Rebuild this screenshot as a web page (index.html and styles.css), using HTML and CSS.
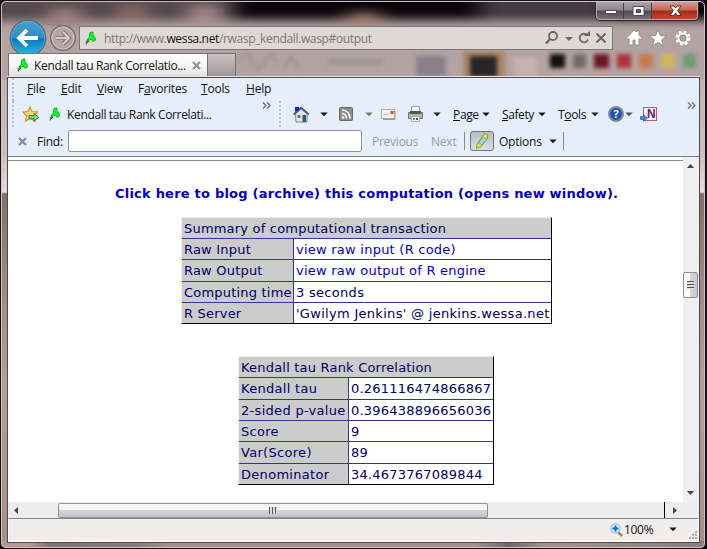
FILE: index.html
```html
<!DOCTYPE html>
<html lang="en">
<head>
<meta charset="utf-8">
<title>Kendall tau Rank Correlation</title>
<link rel="stylesheet" href="styles.css">
</head>
<body>
<svg width="0" height="0" class="defs"><defs>
  <linearGradient id="blue" x1="0" y1="0" x2="0" y2="1"><stop offset="0" stop-color="#4aa3d2"/><stop offset=".48" stop-color="#2b8dc4"/><stop offset=".52" stop-color="#087bbb"/><stop offset="1" stop-color="#35b4e8"/></linearGradient>
  <symbol id="leaf" viewBox="0 0 12 14"><path d="M5.500 1H8v2.500l2.500 4V9L8 10.500 6.500 8.500H5L2.500 11 3 7.500 4.500 6V3z" fill="#00ff17" stroke="#079c18" stroke-width=".7"/><path d="M1.300 13.500v-3l2-2.500M1.500 12.500l2.500-2.500" fill="none" stroke="#087410" stroke-width="1"/></symbol>
  <symbol id="down" viewBox="0 0 8 5"><path d="M.3.5h7.400L4 4.300z" fill="currentColor"/></symbol>
</defs></svg>
<div class="window">
  <svg class="glass" viewBox="0 0 707 549" aria-hidden="true">
    <defs><filter id="b4" color-interpolation-filters="sRGB"><feGaussianBlur stdDeviation="11 5"/></filter><filter id="b2" color-interpolation-filters="sRGB"><feGaussianBlur stdDeviation="2"/></filter>
    <linearGradient id="side" x1="0" y1="0" x2="0" y2="1"><stop offset="0" stop-color="#b6a6a5"/><stop offset=".28" stop-color="#cbbfbd"/><stop offset=".35" stop-color="#e2dcda"/><stop offset=".353" stop-color="#81706f"/><stop offset=".5" stop-color="#9c8785"/><stop offset=".7" stop-color="#b49d97"/><stop offset="1" stop-color="#a58f8b"/></linearGradient>
    <linearGradient id="foot"><stop offset="0" stop-color="#b39b93"/><stop offset=".04" stop-color="#b39b93"/><stop offset=".07" stop-color="#857477"/><stop offset=".19" stop-color="#8b7a7b"/><stop offset=".24" stop-color="#a69390"/><stop offset=".67" stop-color="#a69390"/><stop offset=".72" stop-color="#75666a"/><stop offset=".77" stop-color="#a69390"/><stop offset="1" stop-color="#8d7c7d"/></linearGradient></defs>
    <rect width="707" height="549" fill="url(#side)"/>
    <rect y="20" width="707" height="60" fill="#b3a3a2"/>
    <g filter="url(#b4)"><rect x="-30" y="-20" width="770" height="40" fill="#08040a"/><rect x="-30" y="-20" width="265" height="39" fill="#54484e"/><rect x="50" y="8" width="30" height="20" fill="#a38182"/><rect x="118" y="4" width="28" height="18" fill="#8b6a62"/><rect x="190" y="5" width="30" height="21" fill="#a98c8c"/><rect x="348" y="12" width="32" height="12" fill="#9b7464"/><rect x="480" y="-15" width="130" height="34" fill="#443b42"/></g>
    <g filter="url(#b2)"><path d="M239 62q8-14 13 0t12 0 13 2M283 69l8-12 8 12" fill="none" stroke="#8e8388" stroke-width="3" opacity=".5"/><path d="M328 62h55" stroke="#8d8184" stroke-width="5" opacity=".5"/><rect x="416" y="56" width="30" height="20" fill="#8a8188"/><rect x="463" y="51" width="42" height="26" fill="#a98564"/><rect x="470" y="56" width="27" height="21" fill="#282624"/><rect x="514" y="57" width="23" height="18" fill="#c6b3ae"/>
      <rect x="550" y="54" width="15" height="14" fill="#111"/><rect x="573" y="54" width="13" height="14" fill="#74696a"/><rect x="594" y="54" width="15" height="14" fill="#6c1525"/><rect x="617" y="54" width="14" height="14" fill="#ae343b"/><rect x="639" y="54" width="14" height="14" fill="#c77a4e"/><rect x="661" y="54" width="14" height="14" fill="#cbb95a"/><rect x="683" y="54" width="13" height="14" fill="#6f9c70"/><path d="M593 75h17M638 75h15M661 75h15" stroke="#c09b87" stroke-width="4"/></g>
    <rect y="541" width="707" height="8" fill="url(#foot)"/>
  </svg>

  <header class="titlebar">
    <div class="controls">
      <span class="ctl"><svg width="14" height="12"><rect x="2.500" y="5.500" width="11" height="3" fill="#fff" stroke="#50484e"/></svg></span>
      <span class="ctl"><svg width="14" height="12"><path d="M2 1.500h11v9H2zM5.500 4.500h4v3h-4z" fill="#fff" fill-rule="evenodd" stroke="#50484e"/></svg></span>
      <span class="ctl close"><svg width="14" height="12"><path d="M2 1h4l1.500 2L9 1h4L9.700 5.500 13 10.500H9L7.500 8 6 10.500H2l3.300-5z" fill="#fff" stroke="#593438"/></svg></span>
    </div>
  </header>

  <nav class="navrow">
    <svg class="navbtns" width="72" height="42" viewBox="0 0 72 42">
      <path d="M33 4q7 5 23 4" stroke="#8f8180" fill="none"/>
      <circle cx="21" cy="21" r="17.700" fill="url(#blue)" stroke="#5d6870" stroke-width="1.300"/><circle cx="21" cy="21" r="16.700" fill="none" stroke="#74c0e4" stroke-width=".7" opacity=".7"/>
      <path d="M31 21H13M20 13l-8 8 8 8" fill="none" stroke="#fff" stroke-width="3.800"/>
      <circle cx="56" cy="21" r="12.300" fill="#b4a6a6" stroke="#77696c" stroke-width="1.400"/><circle cx="56" cy="21" r="11" fill="none" stroke="#d3c8c7"/>
      <path d="M49 21h11M56 15l6 6-6 6" fill="none" stroke="#786b6e" stroke-width="4"/><path d="M49 21h11M56 15l6 6-6 6" fill="none" stroke="#d4cccc" stroke-width="2.300"/>
    </svg>
    <div class="address">
      <svg class="leaf" width="12" height="14"><use href="#leaf"/></svg>
      <span class="url">http://www.<b>wessa.net</b>/rwasp_kendall.wasp#output</span>
      <svg class="addrtools" width="64" height="16" viewBox="0 0 64 16"><g fill="none" stroke="#6d6868" stroke-width="1.800"><circle cx="9" cy="6" r="4"/><path d="M6 9l-4 4.500" stroke-width="2.400"/><path d="M43 5a4.300 4.300 0 1 0 1 4.500"/><path d="M52.500 3.500l9 9m0-9l-9 9" stroke-width="2.200"/></g><path d="M40 6h6V1zM21 7h8l-4 4z" fill="#6d6868"/></svg>
    </div>
    <svg class="cmd" width="72" height="20" viewBox="0 0 72 20"><g fill="#fff" stroke="#8c8181" stroke-width=".8"><path d="M1.500 10 9 2l2 2V3h3v4l2.500 3-1 1.500-1.500-.800V17h-4v-5H8v5H4v-6.500l-1.500 1z"/><path d="M33 2l2.400 5.600 6 .3-4.700 3.800 1.700 6-5.400-3.400-5.400 3.400 1.700-6-4.700-3.800 6-.3z"/></g><g fill="none"><circle cx="58" cy="10" r="6.500" stroke="#8c8181" stroke-width="3.500" stroke-dasharray="3 2.100"/><circle cx="58" cy="10" r="6.500" stroke="#fff" stroke-width="2.500" stroke-dasharray="2.900 2.200"/><circle cx="58" cy="10" r="4.500" stroke="#fff" stroke-width="2"/><circle cx="58" cy="10" r="3" stroke="#8c8181" stroke-width=".8"/></g></svg>
  </nav>

  <div class="tabs">
    <div class="tab"><svg width="12" height="14"><use href="#leaf"/></svg><span class="tabtext">Kendall tau Rank Correlatio...</span><svg width="9" height="9"><path d="M1 1l7 7m0-7L1 8" stroke="#959092" stroke-width="2.200"/></svg></div>
    <div class="newtab"></div>
  </div>

  <main class="client">
    <section class="toolbars">
      <div class="menu"><span class="m1"><u>F</u>ile</span><span class="m2"><u>E</u>dit</span><span class="m3"><u>V</u>iew</span><span class="m4">F<u>a</u>vorites</span><span class="m5"><u>T</u>ools</span><span class="m6"><u>H</u>elp</span></div>
      <div class="favs">
        <div class="favlinks">
          <svg width="18" height="17" viewBox="0 0 18 17"><path d="M8 1l2 4.500 5.500.5-4 4 1.500 5-5-2.500L3.500 15l1-5L1 6l5-.5z" fill="#fbd778" stroke="#d4942c" stroke-width="1.200"/><path d="M7 9.500h5V7.300l4.700 4-4.700 4v-2.500H7z" fill="#78d95e" stroke="#397f36"/></svg>
          <svg width="12" height="14"><use href="#leaf"/></svg><span class="favtext">Kendall tau Rank Correlati...</span>
          <svg class="more" width="9" height="7"><path d="M1 .5l3 3-3 3m4-6l3 3-3 3" fill="none" stroke="#5965ad" stroke-width="1.200"/></svg>
        </div>
        <div class="commands">
          <svg class="house" width="17" height="17" viewBox="0 0 17 17"><path d="M2.500 8L8 3l6 5v8h-11z" fill="#e6e6e2" stroke="#88857b"/><path d="M.7 8.500L8.200 1.700l7.500 6.800" fill="none" stroke="#4055a5" stroke-width="1.700"/><path d="M2 1h4v3L2 6z" fill="#1622d3"/><path d="M9.500 9h3.500v7H9.500z" fill="#245795"/><path d="M4.500 9h3v3h-3z" fill="#777"/></svg>
          <svg class="dd d1" width="8" height="5"><use href="#down"/></svg>
          <svg class="rss" width="14" height="14"><rect x=".5" y=".5" width="13" height="13" rx="1" fill="#8b8b8b" stroke="#686868"/><circle cx="4" cy="10.500" r="1.300" fill="#fff"/><path d="M3 6.500a4.500 4.500 0 0 1 4.500 5M3 3a8 8 0 0 1 8 8.500" fill="none" stroke="#fff" stroke-width="1.600"/></svg>
          <svg class="dd d2" width="8" height="5"><use href="#down"/></svg>
          <svg class="mail" width="15" height="11"><rect x=".5" y=".5" width="13" height="9" fill="#f3f1ec" stroke="#b3afaa"/><path d="M14 2v8.500H2" fill="none" stroke="#999"/><path d="M9.500 2h3v3h-3z" fill="#db4745"/><path d="M3 5.500h4" stroke="#bbb"/></svg>
          <svg class="print" width="17" height="16"><path d="M4.500.5h8v6h-8z" fill="#fff" stroke="#999"/><path d="M1.500 6.500h14v6h-14z" fill="#b4b2ad" stroke="#75736e"/><path d="M3 5h11v3H3z" fill="#55534f"/><path d="M4.500 10.500h8v5h-8z" fill="#fff" stroke="#aaa"/><path d="M6 12h2v2H6z" fill="#0db2c6"/><path d="M9 12h2v2H9z" fill="#1f55b4"/></svg>
          <svg class="dd d3" width="8" height="5"><use href="#down"/></svg>
          <span class="page"><u>P</u>age</span><svg class="dd" width="8" height="5"><use href="#down"/></svg>
          <span class="safety"><u>S</u>afety</span><svg class="dd" width="8" height="5"><use href="#down"/></svg>
          <span class="toolcmd">T<u>o</u>ols</span><svg class="dd" width="8" height="5"><use href="#down"/></svg>
          <div class="help">?</div><svg class="dd d7" width="8" height="5"><use href="#down"/></svg>
          <div class="note"><span>N</span><svg width="8" height="8"><path d="M.5 2.500h3V.7L7.500 4 3.500 7.300V5.500h-3z" fill="#3d89e8" stroke="#245bb1" stroke-width=".7"/></svg></div>
          <svg class="more" width="9" height="7"><path d="M1 .5l3 3-3 3m4-6l3 3-3 3" fill="none" stroke="#5965ad" stroke-width="1.200"/></svg>
        </div>
      </div>
      <div class="find">
        <svg width="9" height="9"><path d="M1 1l7 7m0-7L1 8" stroke="#898989" stroke-width="2.200"/></svg><span class="findlabel">Find:</span><input class="findbox" aria-label="Find"><span class="prev">Previous</span><span class="next">Next</span><i></i>
        <div class="highlight"><svg width="14" height="16"><path d="M9.500.5l3.500 1.500-1 4-6 7.500-4.500 2 .5-4z" fill="#e5ec27" stroke="#68713a" stroke-width=".7"/><path d="M8 4l3.500 2-4.500 6-3.500-2z" fill="#a5d3d6" stroke="#6f9294" stroke-width=".6"/></svg></div><span class="options">Options</span><svg class="dd" width="8" height="5"><use href="#down"/></svg><i></i>
      </div>
    </section>
    <div class="viewport">
      <article class="document">
        <hr>
        <p class="blog">Click here to blog (archive) this computation (opens new window).</p>
        <table class="summary"><colgroup><col><col></colgroup>
          <tr><th colspan="2">Summary of computational transaction</th></tr>
          <tr><th>Raw Input</th><td class="link">view raw input (R code)</td></tr>
          <tr><th>Raw Output</th><td class="link">view raw output of R engine</td></tr>
          <tr><th>Computing time</th><td>3 seconds</td></tr>
          <tr><th>R Server</th><td>'Gwilym Jenkins' @ jenkins.wessa.net</td></tr>
        </table>
        <table class="kendall"><colgroup><col><col></colgroup>
          <tr><th colspan="2">Kendall tau Rank Correlation</th></tr>
          <tr><th>Kendall tau</th><td>0.261116474866867</td></tr>
          <tr><th>2-sided p-value</th><td>0.396438896656036</td></tr>
          <tr><th>Score</th><td>9</td></tr>
          <tr><th>Var(Score)</th><td>89</td></tr>
          <tr><th>Denominator</th><td>34.4673767089844</td></tr>
        </table>
      </article>
      <aside class="vscroll"><svg width="7" height="4"><path d="M0 4l3.500-4L7 4z" fill="#444"/></svg><div class="vthumb"><span></span></div><svg width="7" height="4"><path d="M0 0h7L3.500 4z" fill="#444"/></svg></aside>
    </div>
    <div class="hscroll"><svg width="4" height="7"><path d="M4 0v7L0 3.500z" fill="#444"/></svg><div class="hthumb"><span></span></div><b></b><svg width="4" height="7"><path d="M0 0v7l4-3.500z" fill="#444"/></svg></div>
    <footer class="status">
      <svg width="13" height="14"><path d="M8 9l4 4" stroke="#b58355" stroke-width="2.500"/><circle cx="5.500" cy="5.500" r="4.700" fill="#dcefff" stroke="#8caccb"/><path d="M5.500 2.500v6m-3-3h6" stroke="#0873c9" stroke-width="2"/></svg><span>100%</span><svg class="dd" width="8" height="5"><use href="#down"/></svg>
      <svg class="grip" width="9" height="9"><path d="M6 1h2M3 4h2m1 0h2M0 7h2m1 0h2m1 0h2" stroke="#aaa" stroke-width="2"/></svg>
    </footer>
  </main>
</div>
</body>
</html>
```
FILE: styles.css
```css
* { box-sizing: border-box; }
html, body { margin: 0; width: 707px; height: 549px; overflow: hidden; background: #0a070b; }
body { font: 12px "Open Sans", sans-serif; color: #111; }
svg { display: block; flex: none; }
.defs { position: absolute; }
.window { position: relative; width: 707px; height: 549px; display: flex; flex-direction: column; isolation: isolate; overflow: hidden; border: 1px solid #171017; border-right-width: 2px; border-radius: 6px; padding: 0 6px 0 6px; }
.glass { position: absolute; z-index: -1; left: 0; top: 1px; width: 707px; height: 549px; margin: -2px 0 0 -1px; }
.window::after { content: ""; position: absolute; inset: 0; border: 1px solid #cfc5c7; border-radius: 5px; pointer-events: none; }
.titlebar { height: 18px; display: flex; justify-content: flex-end; flex: none; }
.controls { display: flex; width: 104px; height: 20px; border: 1px solid #30272e; outline: 1px solid #b3a9ad; outline-offset: -2px; border-radius: 0 0 5px 5px; overflow: hidden; }
.ctl { width: 28px; display: flex; align-items: center; justify-content: center; border-right: 1px solid #483f46; background: linear-gradient(#a9a3a9, #8e878d 45%, #514a51 50%, #807379); }
.close { width: 46px; border: 0; background: linear-gradient(#d99a90, #c46554 45%, #a72917 50%, #cb4b2b); }
.navrow { height: 38px; display: flex; align-items: center; flex: none; }
.address { width: 534px; height: 24px; border: 1px solid #7e7475; background: #ded8d7; display: flex; align-items: center; }
.leaf { margin-left: 5px; }
.url { margin-left: 7px; width: 440px; white-space: nowrap; color: #7c7778; letter-spacing: -.35px; }
.url b { font-weight: 400; color: #111; }
.cmd { margin-left: 12px; }
.tabs { height: 23px; margin-top: -4px; display: flex; flex: none; align-items: flex-end; padding-left: 1px; position: relative; }
.tab { width: 200px; height: 23px; border: 1px solid #777071; border-bottom: 0; background: linear-gradient(#fff, #f7f5f5 50%, #e5e1e1); display: flex; align-items: center; padding-left: 8px; }
.tabtext { width: 159px; padding-left: 5px; white-space: nowrap; letter-spacing: -.34px; }
.tab svg:last-child { margin-left: 4px; }
.newtab { width: 28px; height: 23px; border: 1px solid #777071; border-left: 0; border-bottom: 0; background: linear-gradient(#c9c4c5, #a09799); }
.client { width: 693px; height: 466px; margin-top: 1px; flex: none; display: flex; flex-direction: column; border: 1px solid #50494c; background: #fff; box-shadow: 0 -1px #ebe4e3; }
.toolbars { height: 79px; background: #e6eefb; border-bottom: 1px solid #777b83; white-space: nowrap; flex: none; }
.menu { height: 23px; display: flex; align-items: center; margin-left: 4px; padding: 0 0 2px 13px; border-left: 2px dotted #b5bdc9; letter-spacing: -.2px; }
u { text-underline-offset: 1px; text-decoration-thickness: 1px; }
.m1 { width: 34px; } .m2 { width: 36px; } .m3 { width: 41px; } .m4 { width: 63px; } .m5 { width: 45px; }
.favs { height: 26px; display: flex; align-items: center; }
.favlinks { margin-left: 4px; width: 267px; height: 26px; display: flex; flex: none; align-items: center; border-left: 2px dotted #b5bdc9; padding-left: 8px; }
.favlinks > svg:nth-child(2) { margin-left: 9px; }
.favtext { width: 193px; margin-left: 6px; letter-spacing: -.35px; }
.more { align-self: flex-start; margin-top: 1px; }
.favlinks .more { margin-left: 2px; }
.commands { flex: 1; height: 26px; display: flex; align-items: center; border-left: 2px dotted #b5bdc9; padding-left: 12px; }
.dd { color: #171717; }
.d1 { margin-left: 10px; } .rss { margin-left: 11px; } .d2 { margin-left: 12px; color: #777; } .mail { margin-left: 8px; } .print { margin-left: 11px; } .d3 { margin-left: 9px; }
.page { margin-left: 12px; width: 29px; letter-spacing: -.35px; } .safety { margin-left: 12px; width: 36px; letter-spacing: -.4px; } .toolcmd { margin-left: 12px; width: 33px; letter-spacing: -.35px; }
.help { width: 16px; height: 16px; margin-left: 9px; border: 2px solid #858b9b; border-radius: 50%; background: #2354af; color: #fff; font: bold 11px/12px "Open Sans", sans-serif; text-align: center; }
.d7 { margin-left: 1px; color: #555; }
.note { width: 14px; height: 14px; position: relative; margin-left: 10px; background: #faf1fb; border: 1px solid #b252ac; font: bold 12px/12px "Liberation Sans", sans-serif; color: #6d205f; padding-left: 3px; margin-top: -1px; }
.note svg { position: absolute; left: -4px; bottom: -2px; }
.commands .more { margin-left: 30px; }
.find { height: 30px; display: flex; align-items: center; padding: 0 0 2px 10px; }
.findlabel { margin-left: 10px; width: 31px; letter-spacing: -.25px; }
.findbox { width: 294px; height: 22px; padding: 0; border: 1px solid #8d939b; border-radius: 2px; background: #fff; }
.prev { margin-left: 10px; width: 59px; color: #999ca0; letter-spacing: -.25px; }
.next { width: 33px; color: #999ca0; letter-spacing: -.2px; }
.find i { width: 1px; height: 18px; background: #868a92; }
.highlight { width: 24px; height: 20px; margin-left: 5px; border: 1px solid #6d727b; border-radius: 3px; background: linear-gradient(#b5bbc4, #dbe0e8); display: grid; place-items: center; }
.options { width: 50px; margin-left: 5px; letter-spacing: -.22px; }
.find .options + .dd + i { margin-left: 6px; }
.viewport { height: 345px; display: flex; flex: none; }
.document { width: 675px; height: 345px; font: 13px "DejaVu Sans", sans-serif; color: #000060; overflow: hidden; }
hr { height: 1px; margin: 3px 0 0; border: 0; background: #909090; }
.blog { margin: 25px 0 0 107px; height: 16px; line-height: 16px; color: #0000c8; font-weight: 700; white-space: nowrap; font-size: 13px; letter-spacing: .22px; }
table { border-collapse: separate; border-spacing: 0; table-layout: fixed; border: 1px solid #eee; border-right-color: #000; border-bottom-color: #000; }
th, td { padding: 2px 0 0 2px; height: 21px; line-height: 18px; border-bottom: 1px solid #333399; font-weight: 400; text-align: left; white-space: nowrap; letter-spacing: .3px; }
tr:last-child > * { border-bottom: 0; height: 20px; }
th { background: #ccc; letter-spacing: .2px; }
th:not([colspan]) { border-right: 1px solid #333399; }
.link { color: #0000c8; letter-spacing: .24px; }
.summary { width: 371px; height: 107px; margin: 15px 0 0 173px; }
.summary col:first-child { width: 112px; }
.kendall { width: 256px; height: 129px; margin: 32px 0 0 230px; }
.kendall col:first-child { width: 110px; }
.kendall td { letter-spacing: .22px; }
.kendall th:not([colspan]) { letter-spacing: .3px; }
.vscroll { width: 16px; background: #efefef; display: flex; flex-direction: column; align-items: center; padding: 7px 1px 7px 0; }
.vthumb { width: 15px; height: 26px; margin-top: 104px; margin-bottom: auto; border: 1px solid #8f9095; border-radius: 2px; background: linear-gradient(90deg, #fafafa 45%, #d5d7da 50%, #c9cacd); display: grid; place-items: center; }
.vthumb span { width: 7px; height: 8px; background: repeating-linear-gradient(#555 0 1px, #ddd 1px 3px); }
.hscroll { height: 16px; flex: none; background: #ededed; display: flex; align-items: center; padding-left: 6px; }
.hthumb { width: 430px; height: 15px; margin-left: 40px; border: 1px solid #8f9095; border-radius: 2px; background: linear-gradient(#f7f7f7 45%, #d5d5d9 50%, #c5c5ca); display: grid; place-items: center; }
.hthumb span { width: 8px; height: 7px; background: repeating-linear-gradient(90deg, #555 0 1px, #ddd 1px 3px); }
.hscroll b { width: 1px; height: 16px; margin-left: 176px; margin-right: 8px; background: #000; }
.status { flex: 1; border: 1px solid #fff; border-top: 1px solid #858585; background: #f0edec; display: flex; align-items: center; padding: 0 0 1px 601px; }
.status span { width: 44px; margin-left: 1px; letter-spacing: -.3px; }
.status .dd { margin-left: 1px; }
.grip { align-self: flex-end; margin-left: 12px; }
```
